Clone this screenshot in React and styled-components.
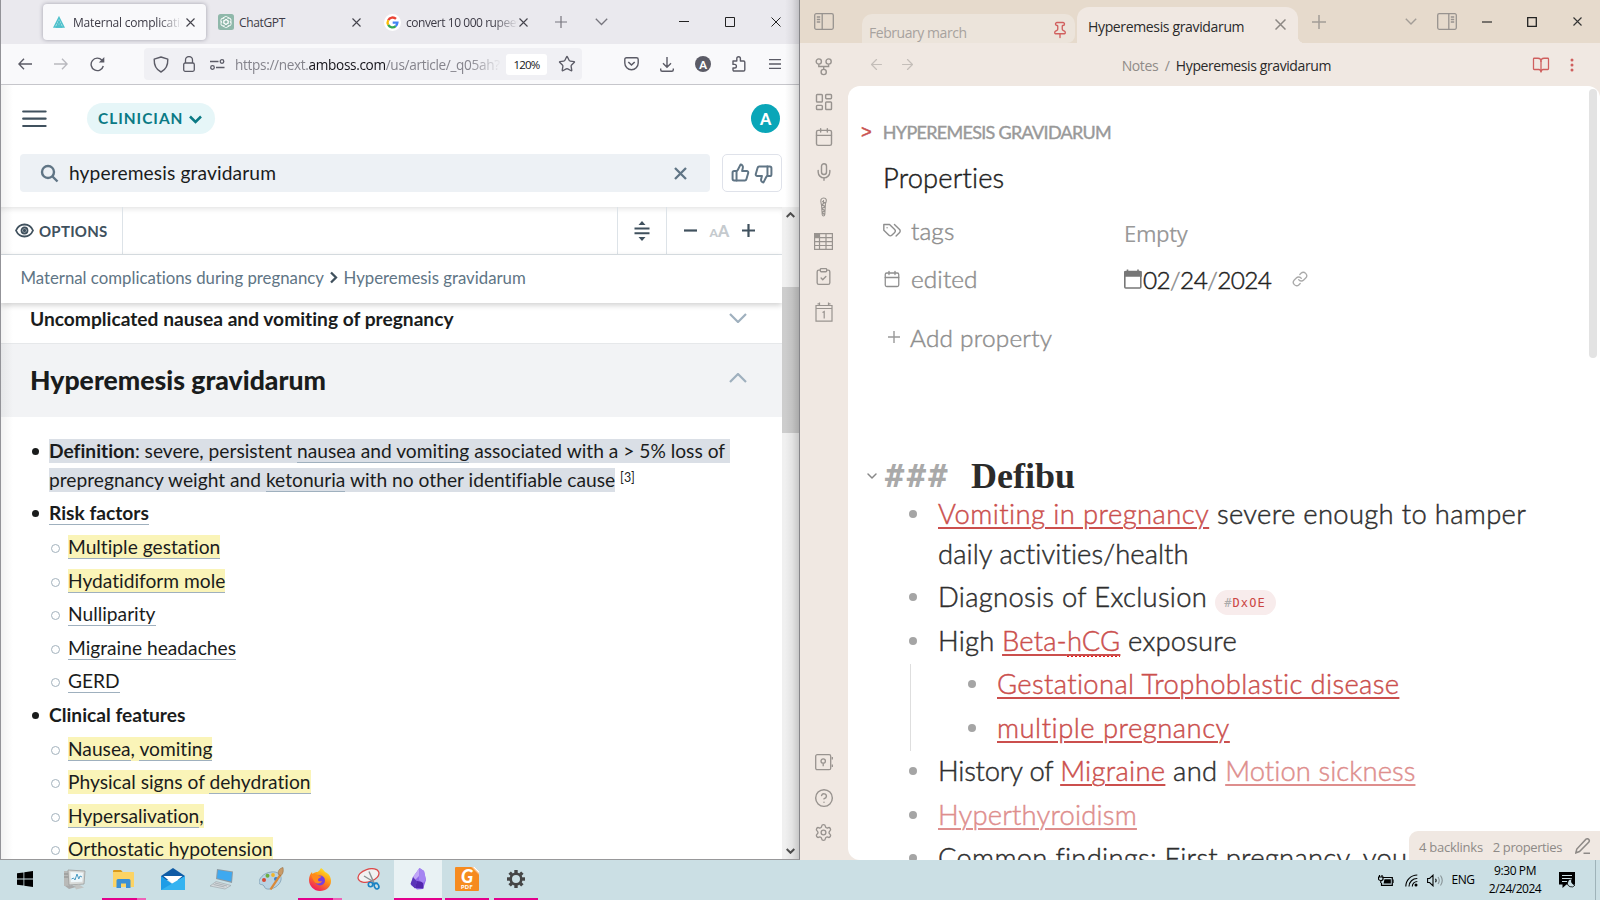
import React from 'react';
import styled, { createGlobalStyle, css } from 'styled-components';
import {
  Calendar, LayoutDashboard, Mic, ClipboardCheck, HelpCircle, Settings, ArrowLeft, ArrowRight,
  ChevronDown, BookOpen, Pin, Link, ThumbsUp, ThumbsDown, Star,
} from 'lucide-react';

const Global = createGlobalStyle`
  * { box-sizing: border-box; }
  body { margin: 0; overflow: hidden; }
  svg { display: block; flex: none; }
`;

const sans = '"Open Sans", "Noto Sans", sans-serif';
const lato = 'Lato, "Open Sans", sans-serif';

const Desktop = styled.div`
  width: 1600px;
  height: 900px;
  display: grid;
  grid-template: 860px 40px / 800px 800px;
  overflow: hidden;
  background: #cbdfe4;
`;

/* shared text and spacing primitives */
const UiText = styled.span`
  font-family: ${sans};
  font-size: ${p => p.$size || 12}px;
  letter-spacing: ${p => p.$track || 0}px;
  color: ${p => p.$color || '#3d3b46'};
  white-space: pre;
`;
const Spring = styled.span`flex: 1;`;
const IconCell = styled.span`
  display: flex;
  align-items: center;
  justify-content: center;
  flex: none;
  width: ${p => p.$w}px;
  height: ${p => p.$h || 24}px;
  color: ${p => p.$color || '#5b5b66'};
`;

/* ---------- browser window ---------- */
const Browser = styled.section`
  position: relative;
  display: flex;
  flex-direction: column;
  border-left: 1px solid #939398;
  border-right: 1px solid #86868a;
  border-bottom: 1px solid #98989a;
  background: #fff;
  overflow: hidden;
  &::after {
    content: '';
    position: absolute;
    inset: 0 0 0 auto;
    width: 14px;
    background: linear-gradient(90deg, rgba(0,0,0,0), rgba(0,0,0,.05) 50%, rgba(0,0,0,.17));
  }
  &::before {
    content: '';
    position: absolute;
    inset: 85px auto 0 0;
    width: 12px;
    z-index: 1;
    background: linear-gradient(270deg, rgba(0,0,0,0), rgba(0,0,0,.05));
  }
`;
const TabStrip = styled.div`
  height: 44px;
  display: flex;
  align-items: center;
  padding-left: 42px;
  background: #eae9ee;
  color: #45444d;
`;
const BrowserTab = styled.div`
  display: flex;
  align-items: center;
  width: ${p => p.$w}px;
  height: 36px;
  padding: 0 13px 0 ${p => p.$pl}px;
  gap: ${p => p.$gap}px;
  border-radius: 4px;
  ${p => p.$active && css`
    padding-right: 11px;
    background: #f9f9fb;
    box-shadow: 0 0 4px rgba(70, 70, 90, .45);
  `}
`;
const TabTitle = styled(UiText)`
  flex: 1;
  margin-right: ${p => (p.$fade ? -4 : 0)}px;
  overflow: hidden;
  ${p => p.$fade && css`mask-image: linear-gradient(90deg, #000 78%, transparent 100%);`}
`;
const NavBar = styled.div`
  height: 41px;
  display: flex;
  align-items: center;
  padding-left: 13px;
  background: #f9f9fb;
  border-bottom: 1px solid #c6c6cb;
`;
const UrlField = styled.div`
  display: flex;
  align-items: center;
  width: 438px;
  height: 32px;
  margin-left: 36px;
  padding-left: 7px;
  border-radius: 4px;
  background: #f0f0f4;
`;
const Url = styled(UiText)`
  flex: none;
  width: 267px;
  margin-left: 8px;
  overflow: hidden;
  mask-image: linear-gradient(90deg, #000 88%, transparent 100%);
  b { font-weight: 400; color: #15141a; }
`;
const ZoomPill = styled.div`
  flex: none;
  width: 41px;
  height: 21px;
  margin-left: 4px;
  display: flex;
  align-items: center;
  justify-content: center;
  border-radius: 3px;
  background: #fff;
`;
const AccountDot = styled.span`
  display: flex;
  align-items: center;
  justify-content: center;
  width: ${p => p.$d}px;
  height: ${p => p.$d}px;
  border-radius: 50%;
  background: ${p => p.$bg};
  color: #fff;
  font: 900 ${p => p.$size}px ${lato};
`;

/* ---------- article page ---------- */
const SiteHeader = styled.header`
  flex: none;
  height: 122px;
  padding: 18px 17px 0 19px;
  display: flex;
  flex-direction: column;
  gap: 20px;
`;
const HeaderRow = styled.div`
  display: flex;
  align-items: center;
`;
const ClinicianPill = styled.button`
  display: flex;
  align-items: center;
  gap: 8px;
  width: 128px;
  height: 31px;
  margin-left: 38px;
  padding: 0 0 1px 11px;
  border: 0;
  border-radius: 16px;
  background: #e6f6f8;
  color: #0b7a85;
  font: 700 15.4px ${lato};
  letter-spacing: 1px;
  svg { margin-left: -2px; margin-top: 2px; }
`;
const SearchBox = styled.div`
  display: flex;
  align-items: center;
  width: 690px;
  height: 38px;
  padding-left: 20px;
  border-radius: 4px;
  background: #edf1f5;
  color: #607585;
`;
const Query = styled.span`
  flex: 1;
  margin-left: 10px;
  padding-bottom: 1px;
  font: 19.2px ${lato};
  letter-spacing: .12px;
  color: #1a1c1c;
`;
const VoteBox = styled.div`
  display: flex;
  align-items: center;
  justify-content: center;
  gap: 4px;
  width: 60px;
  height: 38px;
  margin-left: 12px;
  border: 1px solid #dfe2ea;
  border-radius: 5px;
  color: #607585;
  svg:first-child { margin-bottom: 2px; }
  svg:last-child { margin-top: 2px; }
`;
const Viewport = styled.div`
  flex: 1;
  min-height: 0;
  display: flex;
`;
const Article = styled.div`
  width: 781px;
  display: flex;
  flex-direction: column;
  overflow: hidden;
  font-family: ${lato};
  font-variant-ligatures: none;
  color: #1a1c1c;
`;
const ToolRow = styled.div`
  flex: none;
  height: 48px;
  display: flex;
  border-bottom: 1px solid #dde3e8;
  box-shadow: inset 0 5px 6px -4px rgba(0, 0, 0, .14);
`;
const ToolCell = styled.div`
  display: flex;
  align-items: center;
  width: ${p => p.$w}px;
  padding-left: ${p => p.$pl || 0}px;
  padding-right: ${p => (p.$pl ? 0 : 1)}px;
  justify-content: ${p => (p.$pl ? 'flex-start' : 'center')};
  gap: ${p => p.$gap || 0}px;
  border-${p => p.$side || 'left'}: 1px solid #dde3e8;
  font: 700 15px ${lato};
  letter-spacing: .25px;
  color: #40515e;
`;
const SizeMark = styled.span`
  font: 900 16px ${lato};
  letter-spacing: 0;
  color: #c5cace;
  small { font-size: 12px; }
`;
const Crumbs = styled.nav`
  flex: none;
  height: 48px;
  display: flex;
  align-items: center;
  padding: 0 0 4px 19.4px;
  gap: 5.8px;
  font-size: 16.8px;
  color: #607585;
  background: #fff;
  box-shadow: 0 2px 6px rgba(0, 0, 0, .2);
  z-index: 1;
`;
const SectionTitle = styled.div`
  flex: none;
  display: flex;
  align-items: center;
  justify-content: space-between;
  height: ${p => (p.$open ? 74 : 40)}px;
  padding: 0 35px ${p => (p.$open ? 2 : 9)}px 29px;
  font-size: ${p => (p.$open ? 26.6 : 19.2)}px;
  font-weight: ${p => (p.$open ? 900 : 700)};
  background: ${p => (p.$open ? '#f2f3f5' : '#fff')};
  border-top: ${p => (p.$open ? '1px solid #e6e8ea' : '0')};
  svg { margin-bottom: ${p => (p.$open ? 4 : 1)}px; }
`;
const Facts = styled.ul`
  flex: none;
  margin: 0;
  padding: 20px 0 0 48px;
  list-style: none;
  font-size: 19.2px;
  line-height: 28.8px;
`;
const Fact = styled.li`
  position: relative;
  margin: 0 0 4.8px ${p => (p.$sub ? 19 : 0)}px;
  white-space: nowrap;
  &::before {
    content: '';
    position: absolute;
    left: -17px;
    top: 11px;
    width: 7px;
    height: 7px;
    border-radius: 50%;
    ${p => (p.$sub ? 'border: 1px solid #a3b2bd;' : 'background: #1a1c1c;')}
  }
`;
const Selected = styled.span`
  padding: 0 ${p => p.$tail || 0}px 1px 0;
  background: #dadfe6;
`;
const Mark = styled.span`
  padding-bottom: 1px;
  background: #faf4b8;
`;
const Term = styled.span`
  border-bottom: 1px solid #9fb0be;
`;
const Cite = styled.sup`
  margin-left: 5px;
  font-size: 12.4px;
  line-height: 0;
  vertical-align: 5px;
`;
const Scrollbar = styled.div`
  width: 17px;
  display: flex;
  flex-direction: column;
  align-items: center;
  background: #f0f0f0;
`;
const Thumb = styled.div`
  width: 17px;
  height: 146px;
  margin: 65px 0 auto;
  background: #cdcdcd;
`;

/* ---------- notes window ---------- */
const Notes = styled.section`
  display: flex;
  flex-direction: column;
  background: #f0e8e2;
  overflow: hidden;
`;
const NotesTabs = styled.div`
  flex: none;
  height: 43px;
  display: flex;
  align-items: flex-end;
  background: #e6dacc;
`;
const NotesTab = styled.div`
  position: relative;
  display: flex;
  align-items: center;
  width: ${p => p.$w}px;
  height: ${p => (p.$active ? 36 : 29)}px;
  padding: ${p => (p.$active ? '2px 12px 0 11px' : '7px 6px 0 7px')};
  border-radius: ${p => (p.$active ? '12px 12px 0 0' : '10px 10px 8px 0')};
  background: ${p => (p.$active ? '#f0e8e2' : '#ece4db')};
  svg { margin-top: -4px; }
  ${p => p.$active && css`
    &::after {
      content: '';
      position: absolute;
      left: 100%;
      bottom: 0;
      width: 7px;
      height: 7px;
      background: radial-gradient(circle at 100% 0, #e6dacc 7px, #f0e8e2 7.5px);
    }
  `}
`;
const TabBarIcons = styled.div`
  display: flex;
  align-items: center;
  height: 43px;
`;
const NotesHeader = styled.div`
  flex: none;
  height: 43px;
  display: flex;
  align-items: center;
  padding-left: 64px;
`;
const Path = styled.span`
  display: flex;
  padding-top: 2px;
`;
const NotesBody = styled.div`
  flex: 1;
  min-height: 0;
  display: flex;
`;
const Ribbon = styled.div`
  width: 48px;
  margin-top: -37px;
  padding-right: 1px;
  display: flex;
  flex-direction: column;
  align-items: center;
  color: #98938f;
`;
const RibbonItem = styled.span`
  width: 24px;
  height: 35px;
  display: flex;
  align-items: center;
  justify-content: center;
`;
const Page = styled.main`
  position: relative;
  width: 752px;
  height: 774px;
  overflow: hidden;
  display: flex;
  flex-direction: column;
  padding: 25px 0 0 35px;
  border-radius: 12px 12px 0 12px;
  background: #fff;
  font-family: ${lato};
  font-weight: 300;
  -webkit-text-stroke: .45px currentColor;
  font-variant-ligatures: none;
`;
const InlineTitle = styled.div`
  flex: none;
  height: 40px;
  margin-left: -22px;
  padding-top: 1px;
  display: flex;
  align-items: center;
  gap: 11px;
  font-size: 18px;
  font-weight: 400;
  letter-spacing: -.7px;
  -webkit-text-stroke: .4px #999;
  color: #999;
`;
const Caret = styled.span`
  padding-top: 3px;
  font: 400 18px "Liberation Mono", monospace;
  letter-spacing: 0;
  -webkit-text-stroke: .5px #c9514f;
  color: #c9514f;
`;
const PropHeading = styled.div`
  flex: none;
  height: 40px;
  margin-top: 7px;
  line-height: 40px;
  font-size: 27.3px;
  letter-spacing: .15px;
  color: #222;
`;
const PropRow = styled.div`
  flex: none;
  display: flex;
  align-items: center;
  height: 48px;
  margin-top: ${p => p.$mt || 0}px;
  font-size: 24.4px;
  color: #8e8e8e;
`;
const PropName = styled.span`
  width: 213px;
  margin-left: 10px;
  padding-bottom: 2px;
  letter-spacing: .1px;
`;
const AddLabel = styled.span`
  margin-left: 5px;
  letter-spacing: .22px;
`;
const PropValue = styled.span`
  font-family: ${sans};
  font-weight: 400;
  -webkit-text-stroke: 0;
  font-size: 22.2px;
  letter-spacing: -.4px;
  padding-top: 4px;
  color: #999;
`;
const DateValue = styled.span`
  margin: 0 21px 0 1px;
  letter-spacing: -.6px;
  color: #222;
  i { font-style: normal; color: #888; }
`;
const NoteHeading = styled.h3`
  flex: none;
  display: flex;
  align-items: center;
  height: 44px;
  margin: 88px 0 0 -19px;
  padding-top: 10px;
  font: 700 36px "Liberation Serif", serif;
  -webkit-text-stroke: 0;
  color: #2b2b2b;
`;
const Hashes = styled.span`
  width: 86px;
  margin-left: 5px;
  font: 700 32px "DejaVu Sans Mono", monospace;
  letter-spacing: 2.4px;
  color: #a9a9a9;
`;
const Bullets = styled.ul`
  flex: none;
  margin: ${p => (p.$nested ? '0 0 0 -28px' : '1px 0 0')};
  padding: 0 0 0 ${p => (p.$nested ? 86 : 55)}px;
  ${p => p.$nested && 'border-left: 1px solid #dedede;'}
  list-style: none;
  font-size: 27.4px;
  line-height: 39.7px;
  color: #2e2e2e;
`;
const Bullet = styled.li`
  position: relative;
  white-space: nowrap;
  padding: 0 0 3.8px;
  &::before {
    content: '';
    position: absolute;
    left: -29px;
    top: 16px;
    width: 8px;
    height: 8px;
    border-radius: 50%;
    background: #a5a5a5;
  }
`;
const Run = styled.span`letter-spacing: ${p => p.$track || 0}px;`;
const WikiLink = styled.span`
  color: ${p => (p.$faint ? '#de8e8d' : '#cb4f4d')};
  text-decoration: underline;
  text-decoration-thickness: 2px;
  text-underline-offset: 3px;
  letter-spacing: ${p => p.$track || 0}px;
`;
const Misspelt = styled.span`
  background: repeating-linear-gradient(90deg, #e81818 0 2px, transparent 2px 4px) 0 100% / 100% 1px no-repeat;
`;
const Tag = styled.span`
  display: inline-block;
  height: 25px;
  margin-left: 8px;
  padding: 0 10px 0 9px;
  border-radius: 13px;
  background: #f8ecec;
  font: 12px/27px "DejaVu Sans Mono", monospace;
  -webkit-text-stroke: 0;
  letter-spacing: 1.1px;
  vertical-align: 0;
  color: #cb4543;
  i { font-style: normal; color: #aaa; }
`;
const PageThumb = styled.div`
  position: absolute;
  right: 3px;
  top: 3px;
  width: 8px;
  height: 269px;
  border-radius: 4px;
  background: #e3e3e3;
`;
const StatusBar = styled.div`
  position: absolute;
  right: 0;
  bottom: 0;
  width: 191px;
  height: 29px;
  display: flex;
  align-items: center;
  gap: 10px;
  padding: 3px 0 0 10px;
  border-radius: 9px 0 0 0;
  background: #f0e8e2;
  font-weight: 400;
  -webkit-text-stroke: 0;
  color: #8e8a87;
  svg { margin: -3px 0 0 3px; }
`;

/* ---------- taskbar ---------- */
const Taskbar = styled.footer`
  grid-column: 1 / 3;
  display: flex;
  align-items: stretch;
  background: #cbdfe4;
`;
const TaskItem = styled.div`
  display: flex;
  align-items: center;
  justify-content: center;
  width: ${p => p.$w || 49}px;
  background: ${p => (p.$focus ? '#e9f2f4' : 'transparent')};
  border-bottom: 2px solid transparent;
  ${p => p.$run && css`
    border-image: linear-gradient(90deg, transparent ${p.$run[0]}px, #e3008c ${p.$run[0]}px, #e3008c ${p.$run[1]}px,
      ${p.$run[3] || '#e3008c'} ${p.$run[1]}px, ${p.$run[3] || '#e3008c'} ${p.$run[2]}px, transparent ${p.$run[2]}px) 2;
    border-width: 0 0 2px;
  `}
`;
const Clock = styled.div`
  display: flex;
  flex-direction: column;
  align-items: center;
  justify-content: center;
  width: 76px;
  line-height: 18px;
`;
const ShowDesktop = styled.div`
  width: 5px;
  border-left: 1px solid #9fb3b9;
`;
const PdfTile = styled.div`
  display: flex;
  flex-direction: column;
  align-items: center;
  width: 24px;
  height: 24px;
  padding-top: 1px;
  border-radius: 1px;
  background: linear-gradient(225deg, #cbdfe4 3px, #fff 3.5px, #f68b1f 6px);
  color: #fff;
  font: italic 900 18px/17px ${lato};
  small { font: 900 5.5px/5px ${lato}; letter-spacing: .5px; }
`;

const Svg = ({ w, h = w, vb, children, ...rest }) => (
  <svg width={w} height={h} viewBox={vb || `0 0 ${w} ${h}`} fill="none" stroke="currentColor" {...rest}>{children}</svg>
);

const AmbossLogo = () => (
  <Svg w={12} h={13} stroke="#4cc0cb" strokeWidth="1.5">
    <path d="M6 1.5 10.8 11H1.2z" /><path d="M6 5 3.5 11h5z" fill="#4cc0cb" fillOpacity=".5" /><path d="M3.2 7.5 8.5 11M8.8 7.5 3.5 11" strokeWidth="1" />
  </Svg>
);
const ChatLogo = () => (
  <Svg w={16} stroke="#fff" strokeWidth=".9">
    <rect width="16" height="16" rx="2.5" fill="#8fb8aa" stroke="none" />
    {[0, 60, 120, 180, 240, 300].map(a => (
      <path key={a} transform={`rotate(${a} 8 8)`} d="M8 5.6 10.2 6.9V9.6M5.6 5V4.6a2.3 2.3 0 0 1 4-1.4L11 4.1" />
    ))}
  </Svg>
);
const GoogleLogo = () => (
  <Svg w={17} vb="0 0 17 17" strokeWidth="2.3">
    <circle cx="8.5" cy="8.5" r="8.5" fill="#fff" stroke="none" />
    <path d="M12 4.9A4.9 4.9 0 0 0 4.2 6.2" stroke="#ea4335" />
    <path d="M4.2 6.2a4.9 4.9 0 0 0 0 4.7" stroke="#fbbc05" />
    <path d="M4.2 10.9a4.9 4.9 0 0 0 7.5 1.2" stroke="#34a853" />
    <path d="M11.7 12.1a4.9 4.9 0 0 0 1.7-3.4H8.7" stroke="#4285f4" />
  </Svg>
);
const Cross = ({ s = 9, sw = 1.1 }) => <Svg w={s} strokeWidth={sw}><path d={`M.5.5l${s - 1} ${s - 1}m0-${s - 1}l-${s - 1} ${s - 1}`} /></Svg>;

const DoubleTagIcon = () => (
  <Svg w={18} h={18} vb="1 2 22 22" strokeWidth="1.7" strokeLinecap="round" strokeLinejoin="round">
    <path d="M9 5H2v7l6.290 6.290c.94.94 2.480.94 3.420 0l3.580-3.580c.94-.94.94-2.480 0-3.420L9 5ZM6 9.010V9M15 5l6.300 6.300a2.400 2.400 0 0 1 0 3.400L17 19" />
  </Svg>
);
const TableIcon = () => (
  <Svg w={19} h={17} strokeWidth="1.2">
    <path d="M.6.6h17.8v15.8H.6zM.6 4.6h17.8M.6 8.6h17.8M.6 12.5h17.8M5.5.6v15.8M12 .6v15.8" /><path d="M1 1h4v3H1z" fill="currentColor" />
  </Svg>
);
const BoneIcon = () => (
  <Svg w={9} h={20} strokeWidth="1.1">
    <path d="M2 2.5c1-2 4.500-2 5.200 0 .7 2-.8 3-.8 5l-.6 10c-.3 2-2.200 2-2.600 0L2.600 9c0-2-1.400-4-.6-6.500zM3 4.500l3 1-3 2 3 2-3 2 2.600 2-2.300 2 2 2M4.500 3v3" />
  </Svg>
);
const DayIcon = () => (
  <Svg w={18} h={20} strokeWidth="1.2">
    <path d="M1 3.500h16v15.700H1zM1 6.500h16" /><path d="M2.500 1.800h2M13.500 1.800h2M4.500.500v3M13.500.500v3" /><path d="M7.500 10.500 9.200 9.500v7" />
  </Svg>
);
const VaultIcon = () => (
  <Svg w={18} h={17} strokeWidth="1.3">
    <rect x=".7" y=".7" width="15" height="15" rx="1.5" /><circle cx="8.200" cy="7" r="2.200" /><path d="M8.200 9.200v3M17.300 3v2.500M17.300 10.500V13" />
  </Svg>
);
const PanelIcon = ({ right }) => (
  <Svg w={20} h={17} strokeWidth="1.3">
    <g transform={right ? 'translate(20 0) scale(-1 1)' : undefined}>
      <rect x=".7" y=".7" width="18.600" height="15.600" rx="1.5" /><path d="M8.200.700v15.600M2.800 4h3.400M2.800 6.500h3.400M2.800 9h3.400" />
    </g>
  </Svg>
);

const TaskIcons = {
  start: (
    <Svg w={16} h={16} fill="#000" stroke="none"><path d="M0 2.300 6.500 1.400v6.200H0zM7.300 1.300 16 0v7.600H7.300zM0 8.400h6.500v6.200L0 13.700zM7.300 8.400H16V16l-8.700-1.300z" /></Svg>
  ),
  monitor: (
    <Svg w={24} h={22} stroke="none">
      <path d="M1 3h6v15H1z" fill="#b9bab8" /><path d="M1 6h5M1 9h5" stroke="#8b8c8a" /><path d="m5 2 17 1-1 13-15 1z" fill="#d9dbd9" stroke="#9a9c9b" strokeWidth=".8" />
      <path d="m7.500 4 12.500.700-.7 9-11.500.500z" fill="#eff7fa" /><path d="m8.500 11 2-1 1.500 2 2-6 1.800 5 1.200-3 2 1" stroke="#4b9cc4" />
      <path d="m11 17 5-.5 5 3-8 2z" fill="#c2c4c2" /><path d="m2 18 7-1 4 2-7 2z" fill="#aaa" />
    </Svg>
  ),
  folder: (
    <Svg w={22} h={20} stroke="none">
      <path d="M0 1.500Q0 1 1 1h7l2 2.500H0z" fill="#d99a1c" /><path d="M0 3h20.500q.5 0 .5.500V18H0z" fill="#fcd364" />
      <path d="M3.500 19v-7.500q0-1.500 1.500-1.500h11q1.500 0 1.500 1.500V19H13v-4.500H8V19z" fill="#3b8fd4" />
    </Svg>
  ),
  mail: (
    <Svg w={24} h={22} stroke="none">
      <path d="M0 8 12 0l12 8v4H0z" fill="#0f5ba5" /><path d="M2.500 8h19l-9.500 8z" fill="#fff" /><path d="M0 8l12 8.500L24 8v14H0z" fill="#1f9de6" /><path d="M0 22 24 8v14z" fill="#35b3f0" />
    </Svg>
  ),
  laptop: (
    <Svg w={24} h={22} stroke="none">
      <path d="m7 1 16 2.500-1 11.500L6 11z" fill="#8c9aa3" /><path d="m8 2 14 2.200-.8 9.300L7 10.200z" fill="#3fa9f0" /><path d="m6 13.500 15 4-6 3.500-15-3z" fill="#d6dadd" stroke="#98a2a8" strokeWidth=".6" />
      <path d="m5 15 12 3M3.500 16.500l11 2.500" stroke="#98a2a8" strokeWidth=".7" />
    </Svg>
  ),
  paint: (
    <Svg w={26} h={24} stroke="none">
      <path d="M12 5c7-1 11 3 10 8s-8 10-14 9c-3-.5-2-3-4-4s-4 0-4-3S4 6 12 5z" fill="#b9d3e3" stroke="#7e9db3" strokeWidth=".8" />
      <circle cx="5" cy="13" r="2" fill="#d64a33" /><circle cx="8.500" cy="8.800" r="2" fill="#6cae3e" /><circle cx="14" cy="8" r="1.900" fill="#f1b52c" /><circle cx="17" cy="12" r="2" fill="#3c7cc8" />
      <path d="m10.500 22 10-15 2 1.300L12.500 23z" fill="#d98a3a" /><path d="M19.500 7.500c-1-3 .5-6 4.500-7 .5 3 .5 6-2 8z" fill="#c99b67" stroke="#8f6236" strokeWidth=".5" />
    </Svg>
  ),
  firefox: (
    <Svg w={24} h={24} stroke="none">
      <defs><linearGradient id="ff" x1=".8" y1=".1" x2=".3" y2="1"><stop offset="0" stopColor="#ffe226" /><stop offset=".45" stopColor="#ff8a16" /><stop offset="1" stopColor="#ee1564" /></linearGradient></defs>
      <path d="M13 1c2 1 3 3 4 4 3 1 6 4 6 9 0 6-5 10-11 10S1 19 1 13c0-3 1-6 3-8l.5 2C6 5.500 8 5 9.500 5 11 4 12 3 13 1z" fill="url(#ff)" />
      <circle cx="12" cy="13.500" r="5" fill="#7a3fdd" /><path d="M3 8c3-1.500 6-1 7.500 1l3 .5c-1 1.500-3 1.500-3.500 3-.3 2 2 2.500 4 1.500-1.500 3-5 3-7 1.500C5 13.500 4.500 10.500 3 8z" fill="#ff8a1c" />
    </Svg>
  ),
  snip: (
    <Svg w={24} h={23} fill="none">
      <ellipse cx="11.500" cy="7.500" rx="10.800" ry="6.300" transform="rotate(-18 11.500 7.500)" fill="#f1f1f1" stroke="#dc4a4a" strokeWidth="1.300" />
      <path d="M12 3.500 17 15M7 8l10 6" stroke="#8b9092" strokeWidth="1.400" /><circle cx="13.500" cy="16.500" r="2.200" stroke="#1a82c4" strokeWidth="1.600" /><ellipse cx="19.500" cy="18" rx="2.200" ry="3" transform="rotate(-25 19.500 18)" stroke="#1a82c4" strokeWidth="1.600" /><path d="M15 15.500h6" stroke="#1a82c4" strokeWidth="1.600" />
    </Svg>
  ),
  crystal: (
    <Svg w={17} h={22} stroke="none">
      <path d="M9.500 0 14 3l2 9-3 9-6 .5L1 17l2-8z" fill="#9068ea" /><path d="M9.500 0 3 9l2 3 4-4z" fill="#c0a6f7" /><path d="m3 9-2.500 7L5 20.500l2-7z" fill="#5a35b8" /><path d="m7 13 6 1 .5 6.500L5 20z" fill="#5227ad" /><path d="m9.500 0 4.500 3 2 9-3 3-4-3z" fill="#a585f2" />
    </Svg>
  ),
  settings: (
    <Svg w={18} h={18} vb="-9 -9 18 18" stroke="#454545">
      <circle r="5.300" strokeWidth="2.600" />
      {[0, 45, 90, 135, 180, 225, 270, 315].map(a => <path key={a} transform={`rotate(${a})`} d="M0-6V-9" strokeWidth="3.400" />)}
    </Svg>
  ),
};

const facts = [
  { body: <b><Term>Risk factors</Term></b> },
  { sub: 1, body: <Mark><Term>Multiple gestation</Term></Mark> },
  { sub: 1, body: <Mark><Term>Hydatidiform mole</Term></Mark> },
  { sub: 1, body: <Term>Nulliparity</Term> },
  { sub: 1, body: <Term>Migraine headaches</Term> },
  { sub: 1, body: <Term>GERD</Term> },
  { body: <b>Clinical features</b> },
  { sub: 1, body: <Mark><Term>Nausea</Term>, <Term>vomiting</Term></Mark> },
  { sub: 1, body: <Mark>Physical signs of <Term>dehydration</Term></Mark> },
  { sub: 1, body: <Mark><Term>Hypersalivation</Term>,</Mark> },
  { sub: 1, body: <Mark><Term>Orthostatic hypotension</Term></Mark> },
];

function BrowserWindow() {
  return (
    <Browser>
      <TabStrip>
        <BrowserTab $active $w={163} $pl={10} $gap={8}>
          <AmbossLogo /><TabTitle $fade $track={-0.2}>Maternal complicatic</TabTitle><Cross />
        </BrowserTab>
        <BrowserTab $w={168} $pl={12} $gap={5}>
          <ChatLogo /><TabTitle $track={-0.35}>ChatGPT</TabTitle><Cross />
        </BrowserTab>
        <BrowserTab $w={167} $pl={10} $gap={5}>
          <GoogleLogo /><TabTitle $fade $track={-0.45}>convert 10 000 rupees</TabTitle><Cross />
        </BrowserTab>
        <IconCell $w={40} $color="#77767e"><Svg w={12} strokeWidth="1.200"><path d="M6 0v12M0 6h12" /></Svg></IconCell>
        <IconCell $w={40} $color="#77767e"><Svg w={13} h={8} strokeWidth="1.300"><path d="m.8.8 5.700 5.700L12.200.8" /></Svg></IconCell>
        <Spring />
        <IconCell $w={46} $color="#222"><Svg w={10} h={2}><path d="M0 .5h10" /></Svg></IconCell>
        <IconCell $w={46} $color="#222"><Svg w={10}><path d="M.5.5h9v9h-9z" /></Svg></IconCell>
        <IconCell $w={46} $color="#222"><Cross s={10} sw={1} /></IconCell>
      </TabStrip>
      <NavBar>
        <IconCell $w={22}><Svg w={14} h={12} strokeWidth="1.400"><path d="M6 .800.900 6 6 11.200M1 6h13" /></Svg></IconCell>
        <IconCell $w={50} $color="#b9b9bf"><Svg w={14} h={12} strokeWidth="1.400"><path d="M8 .800 13.100 6 8 11.200M13 6H0" /></Svg></IconCell>
        <IconCell $w={22}><Svg w={15} h={15} strokeWidth="1.400"><path d="M13.300 9A6.200 6.200 0 1 1 12 3.300" /><path d="M14.300 0v5.500H8.800z" fill="currentColor" stroke="none" /></Svg></IconCell>
        <UrlField>
          <IconCell $w={20}><Svg w={16} h={17} strokeWidth="1.400"><path d="M8 1 1.200 3.200C1 9 3 13.500 8 16c5-2.500 7-7 6.800-12.800z" strokeLinejoin="round" /></Svg></IconCell>
          <IconCell $w={36}><Svg w={12} h={16} strokeWidth="1.300"><rect x=".7" y="7" width="10.600" height="8.300" rx="1.500" /><path d="M2.500 7V4a3.500 3.500 0 0 1 7 0v3" /></Svg></IconCell>
          <IconCell $w={20}><Svg w={15} h={11} strokeWidth="1.300"><path d="M0 2.500h8.500M6 8.500h8.500" /><circle cx="12" cy="2.500" r="1.800" /><circle cx="2.500" cy="8.500" r="1.800" /></Svg></IconCell>
          <Url $size={13.6} $track={-0.33} $color="#85848c">https://next.<b>amboss.com</b>/us/article/_q05ah?</Url>
          <ZoomPill><UiText $size={11.5} $track={-0.75} $color="#15141a">120%</UiText></ZoomPill>
          <IconCell $w={40}><Star size={18} strokeWidth={1.8} /></IconCell>
        </UrlField>
        <Spring />
        <IconCell $w={36}><Svg w={15} h={14} strokeWidth="1.400"><path d="M2.500.8h10q1.700 0 1.700 1.700V6a6.700 6.700 0 0 1-13.400 0V2.500Q.8.800 2.500.8z" /><path d="m4.300 5 3.200 3 3.200-3" strokeWidth="1.600" /></Svg></IconCell>
        <IconCell $w={36}><Svg w={14} h={15} strokeWidth="1.400"><path d="M7 0v10M3 6.300l4 4 4-4M.7 11.500v1.300q0 1.500 1.500 1.500h9.600q1.500 0 1.500-1.500v-1.300" /></Svg></IconCell>
        <IconCell $w={36}><AccountDot $d={16} $bg="#5b5b66" $size={11}>A</AccountDot></IconCell>
        <IconCell $w={36}><Svg w={14} h={16} strokeWidth="1.400"><path d="M1 5h3.800V2.600a1.800 1.800 0 0 1 3.600 0V5h3.200q1.200 0 1.200 1.200v7.600q0 1.200-1.200 1.200H2.200Q1 15 1 13.800V12h1.600a1.800 1.800 0 0 0 0-3.600H1z" strokeLinejoin="round" /></Svg></IconCell>
        <IconCell $w={36}><Svg w={12} h={10} strokeWidth="1.300"><path d="M0 .7h12M0 5h12M0 9.300h12" /></Svg></IconCell>
        <IconCell $w={6} />
      </NavBar>

      <SiteHeader>
        <HeaderRow>
          <IconCell $w={29} $color="#40515e"><Svg w={25} h={18} strokeWidth="2.200" strokeLinecap="round"><path d="M1.200 1.500h22.400M1.200 8.700h22.400M1.200 16h22.400" /></Svg></IconCell>
          <ClinicianPill>CLINICIAN<Svg w={13} h={9} strokeWidth="2.500"><path d="m1 1.500 5.500 5.500L12 1.500" /></Svg></ClinicianPill>
          <Spring />
          <AccountDot $d={29} $bg="#0aa6b8" $size={16}>A</AccountDot>
          <IconCell $w={2} />
        </HeaderRow>
        <HeaderRow>
          <SearchBox>
            <Svg w={19} strokeWidth="2.400"><circle cx="8" cy="8" r="6" /><path d="m12.500 12.500 5 5" /></Svg>
            <Query>hyperemesis gravidarum</Query>
            <IconCell $w={60}><Svg w={13} strokeWidth="2.300" stroke="#607585"><path d="m1 1 11 11M12 1 1 12" /></Svg></IconCell>
          </SearchBox>
          <VoteBox><ThumbsUp size={19} strokeWidth={2.5} /><ThumbsDown size={19} strokeWidth={2.5} /></VoteBox>
        </HeaderRow>
      </SiteHeader>

      <Viewport>
        <Article>
          <ToolRow>
            <ToolCell $side="right" $w={122} $pl={14} $gap={5}>
              <Svg w={19} h={15} strokeWidth="1.800"><path d="M1 7.500C4.500-.500 14.500-.500 18 7.500 14.500 15.500 4.500 15.500 1 7.500z" /><circle cx="9.500" cy="7.500" r="3" /><circle cx="9.500" cy="7.500" r=".8" /></Svg>
              OPTIONS
            </ToolCell>
            <Spring />
            <ToolCell $w={49}>
              <Svg w={16} h={20} strokeWidth="2"><path d="M.5 7.500h15M.5 12.200h15" /><path d="M4.500 4 8 0l3.500 4zM4.500 16 8 20l3.500-4z" fill="currentColor" stroke="none" /></Svg>
            </ToolCell>
            <ToolCell $w={116} $pl={17} $gap={12.5}>
              <Svg w={13} strokeWidth="2.200"><path d="M0 6.500h13" /></Svg>
              <SizeMark><small>A</small>A</SizeMark>
              <Svg w={13} strokeWidth="2.200"><path d="M0 6.500h13M6.500 0v13" /></Svg>
            </ToolCell>
          </ToolRow>
          <Crumbs>
            Maternal complications during pregnancy
            <Svg w={8} h={13} strokeWidth="2.300" stroke="#40515e"><path d="m1 1.500 5 5-5 5" /></Svg>
            Hyperemesis gravidarum
          </Crumbs>
          <SectionTitle>
            Uncomplicated nausea and vomiting of pregnancy
            <Svg w={18} h={10} strokeWidth="2.200" stroke="#9fb0be"><path d="m1 1 8 8 8-8" /></Svg>
          </SectionTitle>
          <SectionTitle $open>
            Hyperemesis gravidarum
            <Svg w={18} h={10} strokeWidth="2.200" stroke="#9fb0be"><path d="m1 9 8-8 8 8" /></Svg>
          </SectionTitle>
          <Facts>
            <Fact>
              <Selected $tail={5}><b>Definition</b>: severe, persistent <Term>nausea and vomiting</Term> associated with a &gt; 5% loss of</Selected>
              <br />
              <Selected>prepregnancy weight and <Term>ketonuria</Term> with no other identifiable cause</Selected><Cite>[3]</Cite>
            </Fact>
            {facts.map((f, i) => <Fact key={i} $sub={f.sub}>{f.body}</Fact>)}
          </Facts>
        </Article>
        <Scrollbar>
          <IconCell $w={17} $h={15} $color="#505050"><Svg w={9} h={6} strokeWidth="2"><path d="m.7 5 3.800-3.800L8.300 5" /></Svg></IconCell>
          <Thumb />
          <IconCell $w={17} $h={17} $color="#505050"><Svg w={9} h={6} strokeWidth="2"><path d="m.7 1 3.800 3.800L8.300 1" /></Svg></IconCell>
        </Scrollbar>
      </Viewport>
    </Browser>
  );
}

function NotesWindow() {
  const thin = { strokeWidth: 1.7 };
  return (
    <Notes>
      <NotesTabs>
        <TabBarIcons><IconCell $w={48} $color="#98938f"><PanelIcon /></IconCell></TabBarIcons>
        <IconCell $w={14} />
        <NotesTab $w={213}>
          <UiText $size={14} $track={-0.45} $color="#a7a29e">February march</UiText><Spring />
          <Pin size={18} color="#d1605f" strokeWidth={1.8} />
        </NotesTab>
        <IconCell $w={2} />
        <NotesTab $active $w={221}>
          <UiText $size={14} $track={-0.35} $color="#2a2a2a">Hyperemesis gravidarum</UiText><Spring />
          <IconCell $w={12} $h={28} $color="#8d8884"><Cross s={11} sw={1.5} /></IconCell>
        </NotesTab>
        <TabBarIcons>
          <IconCell $w={41} $color="#a39d97"><Svg w={14} strokeWidth="1.500"><path d="M7 0v14M0 7h14" /></Svg></IconCell>
          <IconCell $w={53} />
          <IconCell $w={38} $color="#a39d97"><Svg w={12} h={7} strokeWidth="1.400"><path d="m.8.8 5.200 5.200L11.200.8" /></Svg></IconCell>
          <IconCell $w={33} $color="#98938f"><PanelIcon right /></IconCell>
          <IconCell $w={47} $color="#77726c"><Svg w={10} h={2} strokeWidth="2"><path d="M0 1h10" /></Svg></IconCell>
          <IconCell $w={44} $color="#222"><Svg w={10} strokeWidth="1.300"><path d="M.7.700h8.600v8.600H.7z" /></Svg></IconCell>
          <IconCell $w={46} $color="#333"><Cross s={9} sw={1.1} /></IconCell>
        </TabBarIcons>
      </NotesTabs>
      <NotesHeader>
        <IconCell $w={24} $color="#c4beb9"><ArrowLeft size={17} strokeWidth={1.7} /></IconCell>
        <IconCell $w={38} $color="#c4beb9"><ArrowRight size={17} strokeWidth={1.7} /></IconCell>
        <Spring />
        <Path>
          <UiText $size={14} $track={-0.4} $color="#8f8b88">Notes  /  </UiText>
          <UiText $size={14} $track={-0.4} $color="#2a2a2a">Hyperemesis gravidarum</UiText>
        </Path>
        <IconCell $w={195.5} />
        <IconCell $w={28} $color="#cf5f5e"><BookOpen size={18} strokeWidth={1.7} /></IconCell>
        <IconCell $w={34} $color="#cf5f5e"><Svg w={4} h={14} fill="currentColor" stroke="none"><circle cx="2" cy="2" r="1.500" /><circle cx="2" cy="7" r="1.500" /><circle cx="2" cy="12" r="1.500" /></Svg></IconCell>
        <IconCell $w={11.5} />
      </NotesHeader>
      <NotesBody>
        <Ribbon>
          <RibbonItem><Svg w={18} h={18} strokeWidth="1.400"><circle cx="3.800" cy="3.500" r="2.600" /><circle cx="13.600" cy="3.500" r="2.600" /><circle cx="8.700" cy="14" r="2.600" /><path d="M3.800 6.200v2.300h9.800V6.200M8.700 8.500v3" /></Svg></RibbonItem>
          <RibbonItem><LayoutDashboard size={20} {...thin} /></RibbonItem>
          <RibbonItem><Calendar size={20} {...thin} /></RibbonItem>
          <RibbonItem><Mic size={20} {...thin} /></RibbonItem>
          <RibbonItem><BoneIcon /></RibbonItem>
          <RibbonItem><TableIcon /></RibbonItem>
          <RibbonItem><ClipboardCheck size={19} {...thin} /></RibbonItem>
          <RibbonItem><DayIcon /></RibbonItem>
          <Spring />
          <RibbonItem><VaultIcon /></RibbonItem>
          <RibbonItem><HelpCircle size={20} {...thin} /></RibbonItem>
          <RibbonItem><Settings size={19} {...thin} /></RibbonItem>
          <IconCell $w={10} $h={10} />
        </Ribbon>
        <Page>
          <InlineTitle><Caret>&gt;</Caret>HYPEREMESIS GRAVIDARUM</InlineTitle>
          <PropHeading>Properties</PropHeading>
          <PropRow $mt={9}>
            <DoubleTagIcon /><PropName>tags</PropName><PropValue>Empty</PropValue>
          </PropRow>
          <PropRow>
            <Calendar size={18} {...thin} /><PropName>edited</PropName>
            <Svg w={18} h={20} strokeWidth="1.600" stroke="#777"><rect x=".8" y="2.500" width="16" height="16.500" rx="1" /><path d="M1 3h16v4H1zM3.500.500v3M14 .500v3" fill="#777" /></Svg>
            <DateValue>02<i>/</i>24<i>/</i>2024</DateValue>
            <Link size={16} color="#aaa" strokeWidth={2} />
          </PropRow>
          <PropRow $mt={10}>
            <IconCell $w={22} $color="#999"><Svg w={12} strokeWidth="1.400"><path d="M6 0v12M0 6h12" /></Svg></IconCell>
            <AddLabel>Add property</AddLabel>
          </PropRow>
          <NoteHeading>
            <ChevronDown size={16} color="#888" strokeWidth={2.2} />
            <Hashes>###</Hashes>Defibu
          </NoteHeading>
          <Bullets>
            <Bullet>
              <WikiLink $track={0.42}>Vomiting in pregnancy</WikiLink><Run $track={0.33}> severe enough to hamper</Run><br />
              <Run $track={0.08}>daily activities/health</Run>
            </Bullet>
            <Bullet><Run $track={0.3}>Diagnosis of Exclusion</Run><Tag><i>#</i>DxOE</Tag></Bullet>
            <Bullet><Run $track={0.2}>High <WikiLink $track={0.15}>Beta-<Misspelt>hCG</Misspelt></WikiLink> exposure</Run></Bullet>
            <Bullets as="div" $nested>
              <Bullet><WikiLink $track={0.36}>Gestational Trophoblastic disease</WikiLink></Bullet>
              <Bullet><WikiLink $track={0.5}>multiple pregnancy</WikiLink></Bullet>
            </Bullets>
            <Bullet><Run $track={-0.2}>History of </Run><WikiLink $track={0.3}>Migraine</WikiLink><Run $track={0.3}> and </Run><WikiLink $faint $track={0.08}>Motion sickness</WikiLink></Bullet>
            <Bullet><WikiLink $faint $track={0.18}>Hyperthyroidism</WikiLink></Bullet>
            <Bullet><Run $track={0.28}>Common findings: First pregnancy, you</Run></Bullet>
          </Bullets>
          <PageThumb />
          <StatusBar>
            <UiText $size={13} $track={-0.25} $color="#8e8a87">4 backlinks</UiText>
            <UiText $size={13} $track={-0.4} $color="#8e8a87">2 properties</UiText>
            <Svg w={16} h={16} strokeWidth="1.500"><path d="M11 1.200q1.500-1 2.700.200t.2 2.700L4.500 13.500l-3.700 1.300 1-3.800zM8.500 15.200H15" /></Svg>
          </StatusBar>
        </Page>
      </NotesBody>
    </Notes>
  );
}

export default function App() {
  return (
    <>
      <Global />
      <Desktop>
        <BrowserWindow />
        <NotesWindow />
        <Taskbar>
          <TaskItem $w={50}>{TaskIcons.start}</TaskItem>
          <TaskItem>{TaskIcons.monitor}</TaskItem>
          <TaskItem $run={[5, 37, 45, '#ee62b8']}>{TaskIcons.folder}</TaskItem>
          <TaskItem>{TaskIcons.mail}</TaskItem>
          <TaskItem $w={50}>{TaskIcons.laptop}</TaskItem>
          <TaskItem>{TaskIcons.paint}</TaskItem>
          <TaskItem $w={48} $run={[4, 36, 44, '#ee62b8']}>{TaskIcons.firefox}</TaskItem>
          <TaskItem $w={50}>{TaskIcons.snip}</TaskItem>
          <TaskItem $focus $w={48} $run={[0, 48, 48]}>{TaskIcons.crystal}</TaskItem>
          <TaskItem $w={50} $run={[5, 45, 45]}><PdfTile>G<small>PDF</small></PdfTile></TaskItem>
          <TaskItem $w={48} $run={[4, 44, 44]}>{TaskIcons.settings}</TaskItem>
          <Spring />
          <IconCell $w={28} $h={40} $color="#000"><Svg w={16} h={11} strokeWidth="1.200"><path d="M4.500 2.500h9.800v7.800H3.500V8M16 4.500v3.500" /><path d="M6.500 4.300h6.300v4.200H5.500z" fill="currentColor" stroke="none" /><path d="M1.500 0v2M4 0v2M.5 2h4.500v2q0 1.500-2.200 1.500T.500 4zM2.800 5.500V8" /></Svg></IconCell>
          <IconCell $w={22} $h={40} $color="#000"><Svg w={13} h={13} strokeWidth="1.100"><circle cx="11" cy="11" r="1.500" fill="currentColor" stroke="none" /><path d="M7.300 12.500a5 5 0 0 1 5-5M4 12.500a8 8 0 0 1 8.300-8M.8 12.500A11.500 11.500 0 0 1 12.300 1" /></Svg></IconCell>
          <IconCell $w={27} $h={40} $color="#000"><Svg w={17} h={13} strokeWidth="1.100"><path d="M.6 4.500h2L6 1.200v10.600L2.600 8.500h-2zM8.500 4.800q1.200 1.700 0 3.500" /><path d="M11 3q2.500 3.500 0 7M13.500 1.500q3.500 5 0 10" stroke="#879296" /></Svg></IconCell>
          <IconCell $w={28} $h={38}><UiText $track={-0.5} $color="#000">ENG</UiText></IconCell>
          <Clock>
            <UiText $track={-0.4} $color="#000">9:30 PM</UiText>
            <UiText $track={-0.5} $color="#000">2/24/2024</UiText>
          </Clock>
          <IconCell $w={28} $h={40} $color="#000"><Svg w={17} h={17}><path d="M0 0h16v12.500H7.500L3.500 16v-3.500H0z" fill="#000" stroke="none" /><path d="M3 3.500h10M3 6.500h10M3 9.500h5" stroke="#cbdfe4" /><path d="M13 7a4 4 0 1 0 3 6 4 4 0 0 1-3-6z" fill="#cbdfe4" stroke="#000" strokeWidth=".8" /></Svg></IconCell>
          <IconCell $w={14} />
          <ShowDesktop />
        </Taskbar>
      </Desktop>
    </>
  );
}
